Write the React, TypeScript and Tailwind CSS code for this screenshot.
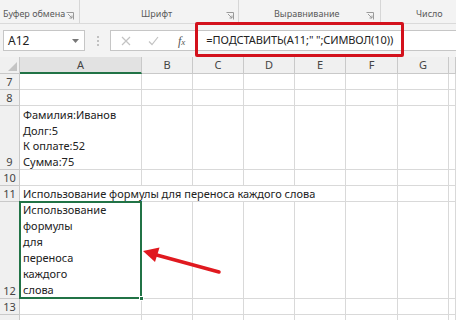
import React from "react";

const font = { fontFamily: '"Noto Sans", "Liberation Sans", sans-serif' };

const cols = ["A", "B", "C", "D", "E", "F", "G", ""];

const Launcher = () => (
  <svg width="8" height="8" viewBox="0 0 8 8" className="shrink-0">
    <path d="M0.5 0.5h7v7" fill="none" stroke="#9a9a9a" strokeWidth="1" />
    <path d="M2 2l4 4M6 3.5V6H3.5" fill="none" stroke="#9a9a9a" strokeWidth="1" />
  </svg>
);

const Ribbon = () => (
  <div className="flex h-[24px] whitespace-nowrap border-b border-[#dadada] bg-[#f3f3f3] text-[9px] text-[#5a5a5a]">
    <div className="flex w-[80px] items-end justify-between border-r border-[#d6d6d6] pb-[3px] pl-[3px] pr-[5px]">
      <span>Буфер обмена</span>
      <Launcher />
    </div>
    <div className="flex w-[159px] items-end border-r border-[#d6d6d6] pb-[3px] pr-[4px]">
      <span className="ml-[61px]">Шрифт</span>
      <span className="ml-auto">
        <Launcher />
      </span>
    </div>
    <div className="flex w-[142px] items-end border-r border-[#d6d6d6] pb-[3px] pr-[6px]">
      <span className="ml-[35px]">Выравнивание</span>
      <span className="ml-auto">
        <Launcher />
      </span>
    </div>
    <div className="flex flex-1 items-end pb-[3px]">
      <span className="ml-[35px]">Число</span>
    </div>
  </div>
);

const FormulaBar = () => (
  <div className="relative flex h-[33px] items-center bg-[#f3f3f3] pl-[3px]">
    <div className="flex h-[21px] w-[82px] items-center justify-between border border-[#c6c6c6] bg-white pl-[4px] pr-[5px] text-[12px] text-[#222]">
      <span>A12</span>
      <svg width="7" height="4" viewBox="0 0 7 4">
        <path d="M0 0h7L3.5 4z" fill="#777" />
      </svg>
    </div>
    <div className="flex w-[25px] flex-col items-center gap-[2px]">
      <span className="h-[2px] w-[2px] rounded-full bg-[#b0b0b0]" />
      <span className="h-[2px] w-[2px] rounded-full bg-[#b0b0b0]" />
      <span className="h-[2px] w-[2px] rounded-full bg-[#b0b0b0]" />
    </div>
    <div className="flex h-[21px] flex-1 items-center whitespace-nowrap border border-r-0 border-[#c6c6c6] bg-white">
      <svg width="10" height="10" viewBox="0 0 10 10" className="ml-[10px]">
        <path d="M1 1l8 8M9 1l-8 8" stroke="#c3c3c3" strokeWidth="1.2" />
      </svg>
      <svg width="11" height="10" viewBox="0 0 11 10" className="ml-[17px]">
        <path d="M1 5.5l3 3L10 1" fill="none" stroke="#c3c3c3" strokeWidth="1.2" />
      </svg>
      <span
        className="ml-[19px] text-[12px] italic text-[#555]"
        style={{ fontFamily: '"Liberation Serif", serif' }}
      >
        f<span className="text-[9px]">x</span>
      </span>
      <span className="ml-[21px] text-[11px] tracking-[-0.1px] text-[#222]">
        =ПОДСТАВИТЬ(A11;" ";СИМВОЛ(10))
      </span>
    </div>
    <div className="pointer-events-none absolute left-[195px] top-[-2px] h-[35px] w-[209px] rounded-[2px] border-[3px] border-[#d3111c]" />
  </div>
);

const Cell = ({
  children,
  className = "",
}: {
  children?: React.ReactNode;
  className?: string;
}) => (
  <div className={`border-b border-r border-[#d9d9d9] ${className}`}>{children}</div>
);

const RowHead = ({ n, className = "" }: { n?: number; className?: string }) => (
  <div
    className={`flex items-end justify-center border-b border-r border-[#c9c9c9] bg-[#f0f0f0] text-[11px] leading-[15px] text-[#444] ${className}`}
  >
    {n}
  </div>
);

const Blank = ({ from }: { from: number }) => (
  <>
    {cols.slice(from).map((c, i) => (
      <Cell key={i} />
    ))}
  </>
);

export default function App() {
  return (
    <div className="relative h-[320px] w-[456px] overflow-hidden bg-white" style={font}>
      <Ribbon />
      <FormulaBar />
      <div className="grid grid-cols-[20px_122px_51px_51px_51px_51px_52px_51px_1fr] grid-rows-[17px_16px_16px_64px_16px_16px_97px_16px_16px] text-[11px] text-[#222]">
        {/* header row */}
        <div className="relative border-b border-r border-[#c9c9c9] bg-[#f0f0f0]">
          <svg width="9" height="9" viewBox="0 0 9 9" className="absolute bottom-[2px] right-[2px]">
            <path d="M9 0V9H0z" fill="#c4c4c4" />
          </svg>
        </div>
        {cols.map((c, i) => (
          <div
            key={i}
            className={`flex items-center justify-center border-r pt-[1px] text-[11px] text-[#444] ${
              i === 0
                ? "border-b-2 border-b-[#217346] border-r-[#c9c9c9] bg-[#e2e2e2]"
                : "border-b border-[#c9c9c9] bg-[#f0f0f0]"
            }`}
          >
            {c}
          </div>
        ))}

        <RowHead n={7} />
        <Blank from={0} />

        <RowHead n={8} />
        <Blank from={0} />

        <RowHead n={9} />
        <Cell className="flex flex-col justify-end whitespace-nowrap pl-[3px] leading-[15.5px]">
          <div>Фамилия:Иванов</div>
          <div>Долг:5</div>
          <div>К оплате:52</div>
          <div>Сумма:75</div>
        </Cell>
        <Blank from={1} />

        <RowHead n={10} />
        <Blank from={0} />

        <RowHead n={11} />
        <Cell className="col-span-5 flex items-end whitespace-nowrap pl-[3px] leading-[15px]">
          Использование формулы для переноса каждого слова
        </Cell>
        <Blank from={5} />

        <RowHead n={12} className="bg-[#d4d4d4]" />
        <Cell className="relative flex flex-col justify-end pl-[3px] leading-[16px]">
          <div>Использование</div>
          <div>формулы</div>
          <div>для</div>
          <div>переноса</div>
          <div>каждого</div>
          <div>слова</div>
          <div className="pointer-events-none absolute -bottom-[1px] -left-[1px] -right-[1px] -top-[1px] border-2 border-[#217346]" />
          <div className="absolute -bottom-[3px] -right-[3px] h-[5px] w-[5px] border border-white bg-[#217346]" />
        </Cell>
        <Blank from={1} />

        <RowHead n={13} />
        <Blank from={0} />

        <RowHead />
        <Blank from={0} />
      </div>

      <svg
        className="pointer-events-none absolute left-0 top-0"
        width="456"
        height="320"
        viewBox="0 0 456 320"
      >
        <line x1="219" y1="272" x2="153" y2="254" stroke="#e0191f" strokeWidth="3.5" strokeLinecap="round" />
        <path d="M143 251L159.5 247.5L155 262z" fill="#e0191f" />
      </svg>
    </div>
  );
}
